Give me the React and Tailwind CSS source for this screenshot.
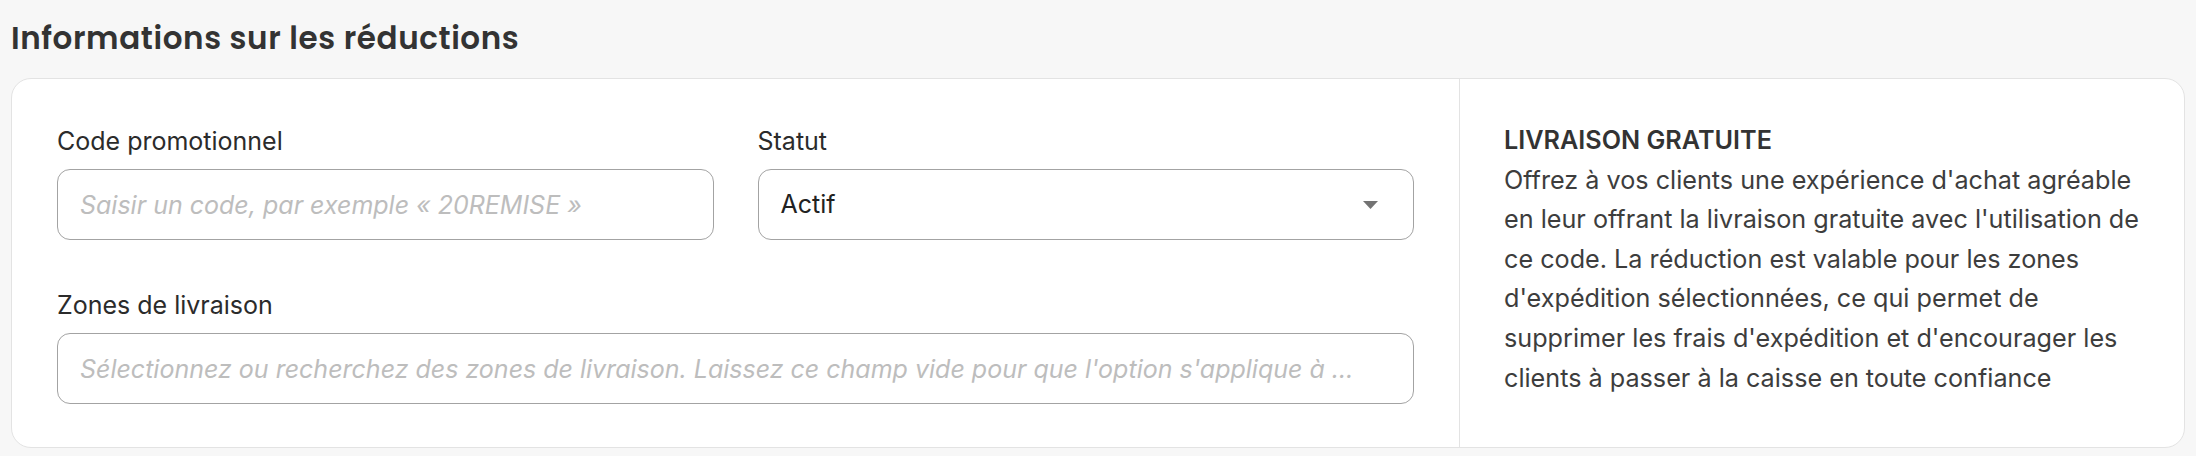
import { useState } from 'react';

function Field({ label, children }) {
    return (
        <div className="flex flex-col gap-[12px]">
            <label className="text-[25px] leading-[32px] text-[#2b2b2b]">{label}</label>
            {children}
        </div>
    );
}

export default function App() {
    const [code, setCode] = useState('');
    const [zones, setZones] = useState('');

    return (
        <div className="min-h-screen bg-[#f7f7f7] px-[11px] pt-[18px] pb-[8px] font-['Inter',sans-serif]">
            <h2 className="font-['Poppins','Inter',sans-serif] text-[31px] leading-[40px] font-semibold text-[#333333] tracking-[0.6px]">
                Informations sur les réductions
            </h2>

            <div className="mt-[20px] flex rounded-[20px] border border-[#e3e3e3] bg-white">
                {/* Form fields */}
                <div className="flex-1 px-[45px] pt-[46px] pb-[43px]">
                    <div className="grid grid-cols-2 gap-x-[44px] gap-y-[49px]">
                        <Field label="Code promotionnel">
                            <input
                                value={code}
                                onChange={(e) => setCode(e.target.value)}
                                placeholder="Saisir un code, par exemple « 20REMISE »"
                                className="h-[71px] w-full rounded-[13px] border border-[#a3a3a3] px-[22px] text-[25px] text-[#222] outline-none placeholder:italic placeholder:text-[#bdbdbd]"
                            />
                        </Field>
                        <Field label="Statut">
                            <div className="flex h-[71px] w-full items-center justify-between rounded-[13px] border border-[#a3a3a3] pl-[22px] pr-[35px] text-[25px] text-[#222]">
                                <span>Actif</span>
                                <svg width="15" height="8" viewBox="0 0 15 8">
                                    <path d="M0 0h15L7.5 8z" fill="#737373" />
                                </svg>
                            </div>
                        </Field>
                        <div className="col-span-2">
                            <Field label="Zones de livraison">
                                <input
                                    value={zones}
                                    onChange={(e) => setZones(e.target.value)}
                                    placeholder="Sélectionnez ou recherchez des zones de livraison. Laissez ce champ vide pour que l'option s'applique à toutes les zones de livraison"
                                    className="h-[71px] w-full text-ellipsis rounded-[13px] border border-[#a3a3a3] pl-[22px] pr-[56px] text-[25px] text-[#222] outline-none placeholder:italic placeholder:text-[#bdbdbd]"
                                />
                            </Field>
                        </div>
                    </div>
                </div>

                {/* Help panel */}
                <div className="w-[725px] border-l border-[#e3e3e3] pl-[44px] pr-[36px] pt-[42px] pb-[40px] text-[25.2px] leading-[39.6px] text-[#3d3d3d]">
                    <p className="font-semibold text-[#333]">LIVRAISON GRATUITE</p>
                    <p>
                        Offrez à vos clients une expérience d'achat agréable en leur offrant la livraison gratuite
                        avec l'utilisation de ce code. La réduction est valable pour les zones d'expédition
                        sélectionnées, ce qui permet de supprimer les frais d'expédition et d'encourager les clients
                        à passer à la caisse en toute confiance
                    </p>
                </div>
            </div>
        </div>
    );
}
